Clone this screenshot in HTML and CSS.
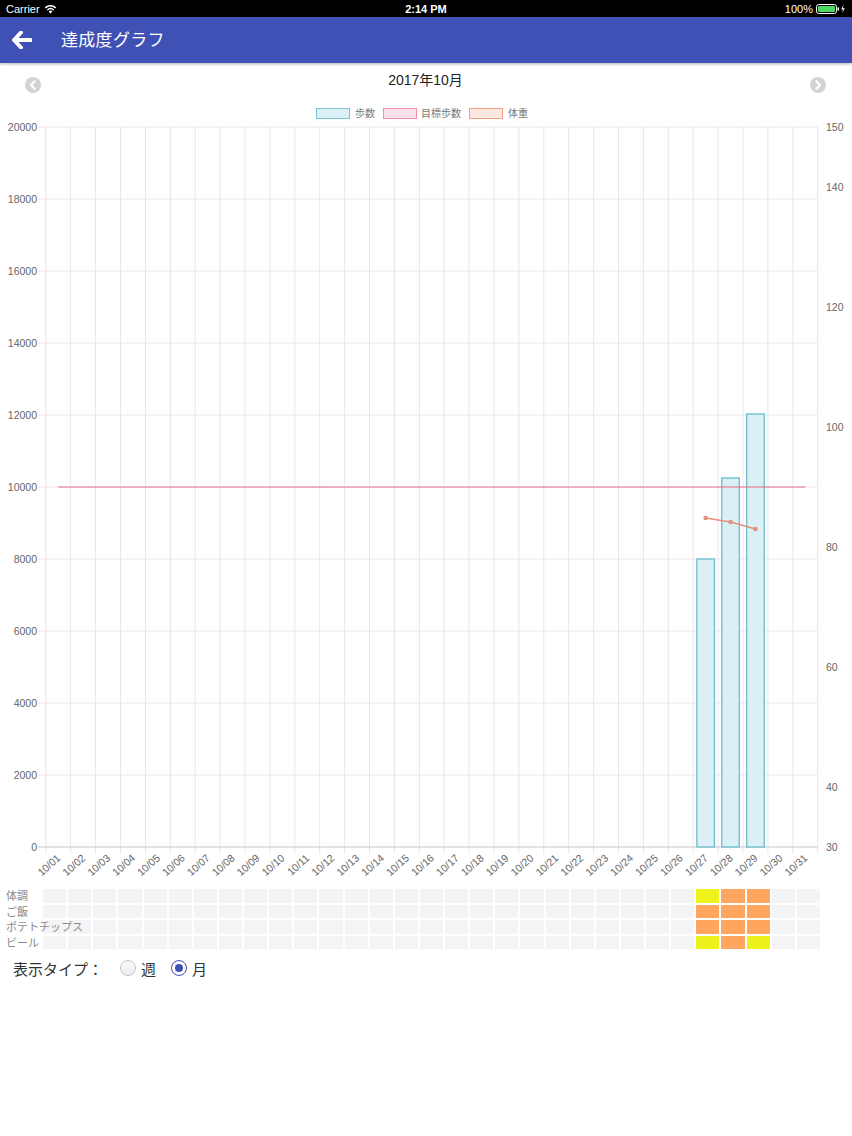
FILE: index.html
```html
<!DOCTYPE html>
<html lang="ja">
<head>
<meta charset="utf-8">
<title>達成度グラフ</title>
<link rel="stylesheet" href="styles.css">
</head>
<body>
<div class="statusbar">
  <div class="sb-left">
    <span class="carrier">Carrier</span>
    <svg class="wifi" width="13" height="10" viewBox="0 0 13 10"><path d="M6.5 9.6 4.6 7.4a2.8 2.8 0 0 1 3.8 0Z" fill="#fff"/><path d="M3.3 6a4.8 4.8 0 0 1 6.4 0" stroke="#fff" stroke-width="1.5" fill="none"/><path d="M1.3 3.9a7.6 7.6 0 0 1 10.4 0" stroke="#fff" stroke-width="1.5" fill="none"/></svg>
  </div>
  <div class="sb-time">2:14 PM</div>
  <div class="sb-right">
    <span>100%</span>
    <svg width="30" height="10" viewBox="0 0 30 10"><rect x="0.5" y="0.5" width="20" height="9" rx="2.3" fill="none" stroke="#fff"/><rect x="2" y="2" width="17" height="6" rx="1" fill="#4cd964"/><rect x="21.5" y="3.2" width="1.5" height="3.6" rx="0.7" fill="#fff"/><path d="M27.5 0.8 25.2 5.4h1.9l-0.9 3.8 2.6-4.9h-1.9L27.5 0.8Z" fill="#fff"/></svg>
  </div>
</div>
<header class="navbar">
  <svg class="back" width="20" height="18" viewBox="0 0 20 18"><path d="M9 1.5 2 9l7 7.5M2.6 9H18.5" stroke="#fff" stroke-width="4" stroke-linecap="round" stroke-linejoin="round" fill="none"/></svg>
  <h1 class="title">達成度グラフ</h1>
</header>
<div class="month-row">
  <span class="nav-btn"><svg width="16" height="16" viewBox="0 0 16 16"><circle cx="8" cy="8" r="8" fill="#d3d3d3"/><path d="M9.6 4.4 6 8l3.6 3.6" stroke="#fff" stroke-width="2.2" fill="none" stroke-linecap="round" stroke-linejoin="round"/></svg></span>
  <div class="month">2017年10月</div>
  <span class="nav-btn"><svg width="16" height="16" viewBox="0 0 16 16"><circle cx="8" cy="8" r="8" fill="#d3d3d3"/><path d="M6.4 4.4 10 8l-3.6 3.6" stroke="#fff" stroke-width="2.2" fill="none" stroke-linecap="round" stroke-linejoin="round"/></svg></span>
</div>
<svg class="chart" width="852" height="785" viewBox="0 100 852 785">
  <g class="legend">
    <rect x="316.5" y="108.5" width="33" height="10" fill="#dbf1f5" stroke="#7cc5d3"/>
    <text x="355" y="117">歩数</text>
    <rect x="383.5" y="108.5" width="33" height="10" fill="#fde2ec" stroke="#f08eac"/>
    <text x="421" y="117">目標歩数</text>
    <rect x="469.5" y="108.5" width="33" height="10" fill="#fee8e2" stroke="#f2a283"/>
    <text x="508" y="117">体重</text>
  </g>
  <path class="grid" d="M38 127H817.7M38 199H817.7M38 271H817.7M38 343H817.7M38 415H817.7M38 487H817.7M38 559H817.7M38 631H817.7M38 703H817.7M38 775H817.7"/>
  <path class="grid" d="M45.8 127V854M70.7 127V854M95.6 127V854M120.5 127V854M145.4 127V854M170.3 127V854M195.2 127V854M220.1 127V854M245 127V854M269.9 127V854M294.8 127V854M319.7 127V854M344.6 127V854M369.5 127V854M394.4 127V854M419.3 127V854M444.2 127V854M469.1 127V854M494 127V854M518.9 127V854M543.8 127V854M568.7 127V854M593.6 127V854M618.5 127V854M643.4 127V854M668.3 127V854M693.2 127V854M718.1 127V854M743 127V854M767.9 127V854M792.8 127V854M817.7 127V854"/>
  <path class="axis" d="M38 847H817.7"/>
  <g class="yl">
    <text x="37" y="131">20000</text>
    <text x="37" y="203">18000</text>
    <text x="37" y="275">16000</text>
    <text x="37" y="347">14000</text>
    <text x="37" y="419">12000</text>
    <text x="37" y="491">10000</text>
    <text x="37" y="563">8000</text>
    <text x="37" y="635">6000</text>
    <text x="37" y="707">4000</text>
    <text x="37" y="779">2000</text>
    <text x="37" y="851">0</text>
  </g>
  <g class="yr">
    <text x="826" y="131">150</text>
    <text x="826" y="191">140</text>
    <text x="826" y="311">120</text>
    <text x="826" y="431">100</text>
    <text x="826" y="551">80</text>
    <text x="826" y="671">60</text>
    <text x="826" y="791">40</text>
    <text x="826" y="851">30</text>
  </g>
  <g class="bars">
    <rect x="696.85" y="559" width="17.6" height="288"/>
    <rect x="721.75" y="478" width="17.6" height="369"/>
    <rect x="746.65" y="414" width="17.6" height="433"/>
  </g>
  <path class="goal" d="M58.25 487H805.25"/>
  <g class="weight">
    <path d="M705.65 518 730.55 522 755.45 529" fill="none"/>
    <circle cx="705.65" cy="518" r="2.3"/>
    <circle cx="730.55" cy="522" r="2.3"/>
    <circle cx="755.45" cy="529" r="2.3"/>
  </g>
  <g class="xl" text-anchor="end">
    <text transform="translate(61.2,859) rotate(-42)">10/01</text>
    <text transform="translate(86.1,859) rotate(-42)">10/02</text>
    <text transform="translate(111,859) rotate(-42)">10/03</text>
    <text transform="translate(135.9,859) rotate(-42)">10/04</text>
    <text transform="translate(160.8,859) rotate(-42)">10/05</text>
    <text transform="translate(185.7,859) rotate(-42)">10/06</text>
    <text transform="translate(210.6,859) rotate(-42)">10/07</text>
    <text transform="translate(235.5,859) rotate(-42)">10/08</text>
    <text transform="translate(260.4,859) rotate(-42)">10/09</text>
    <text transform="translate(285.3,859) rotate(-42)">10/10</text>
    <text transform="translate(310.2,859) rotate(-42)">10/11</text>
    <text transform="translate(335.1,859) rotate(-42)">10/12</text>
    <text transform="translate(360,859) rotate(-42)">10/13</text>
    <text transform="translate(384.9,859) rotate(-42)">10/14</text>
    <text transform="translate(409.8,859) rotate(-42)">10/15</text>
    <text transform="translate(434.7,859) rotate(-42)">10/16</text>
    <text transform="translate(459.6,859) rotate(-42)">10/17</text>
    <text transform="translate(484.5,859) rotate(-42)">10/18</text>
    <text transform="translate(509.4,859) rotate(-42)">10/19</text>
    <text transform="translate(534.3,859) rotate(-42)">10/20</text>
    <text transform="translate(559.2,859) rotate(-42)">10/21</text>
    <text transform="translate(584.1,859) rotate(-42)">10/22</text>
    <text transform="translate(609,859) rotate(-42)">10/23</text>
    <text transform="translate(633.9,859) rotate(-42)">10/24</text>
    <text transform="translate(658.8,859) rotate(-42)">10/25</text>
    <text transform="translate(683.7,859) rotate(-42)">10/26</text>
    <text transform="translate(708.6,859) rotate(-42)">10/27</text>
    <text transform="translate(733.5,859) rotate(-42)">10/28</text>
    <text transform="translate(758.4,859) rotate(-42)">10/29</text>
    <text transform="translate(783.3,859) rotate(-42)">10/30</text>
    <text transform="translate(808.2,859) rotate(-42)">10/31</text>
  </g>
</svg>
<section class="matrix">
  <div class="mrow">
    <span class="mlabel">体調</span>
    <div class="cells">
      <i></i><i></i><i></i><i></i><i></i><i></i><i></i><i></i><i></i><i></i><i></i><i></i><i></i><i></i><i></i><i></i><i></i><i></i><i></i><i></i><i></i><i></i><i></i><i></i><i></i><i></i><i class="y"></i><i class="o"></i><i class="o"></i><i></i><i></i>
    </div>
  </div>
  <div class="mrow">
    <span class="mlabel">ご飯</span>
    <div class="cells">
      <i></i><i></i><i></i><i></i><i></i><i></i><i></i><i></i><i></i><i></i><i></i><i></i><i></i><i></i><i></i><i></i><i></i><i></i><i></i><i></i><i></i><i></i><i></i><i></i><i></i><i></i><i class="o"></i><i class="o"></i><i class="o"></i><i></i><i></i>
    </div>
  </div>
  <div class="mrow">
    <span class="mlabel">ポテトチップス</span>
    <div class="cells">
      <i></i><i></i><i></i><i></i><i></i><i></i><i></i><i></i><i></i><i></i><i></i><i></i><i></i><i></i><i></i><i></i><i></i><i></i><i></i><i></i><i></i><i></i><i></i><i></i><i></i><i></i><i class="o"></i><i class="o"></i><i class="o"></i><i></i><i></i>
    </div>
  </div>
  <div class="mrow">
    <span class="mlabel">ビール</span>
    <div class="cells">
      <i></i><i></i><i></i><i></i><i></i><i></i><i></i><i></i><i></i><i></i><i></i><i></i><i></i><i></i><i></i><i></i><i></i><i></i><i></i><i></i><i></i><i></i><i></i><i></i><i></i><i></i><i class="y"></i><i class="o"></i><i class="y"></i><i></i><i></i>
    </div>
  </div>
</section>
<div class="type-row">
  <span class="type-label">表示タイプ：</span>
  <label class="radio"><span class="dot"></span>週</label>
  <label class="radio"><span class="dot on"></span>月</label>
</div>
</body>
</html>
```
FILE: styles.css
```css
html, body {
  margin: 0;
  padding: 0;
  background: #fff;
}
body {
  width: 852px;
  height: 1136px;
  overflow: hidden;
  font-family: "Liberation Sans", "Noto Sans CJK JP", sans-serif;
  color: #333;
}
.statusbar {
  height: 17px;
  background: #000;
  color: #fff;
  display: flex;
  align-items: center;
  justify-content: space-between;
  padding: 0 6px;
  font-size: 11px;
  position: relative;
}
.sb-left, .sb-right {
  display: flex;
  align-items: center;
  gap: 4px;
}
.sb-right { gap: 3px; }
.sb-time {
  font-weight: bold;
  position: absolute;
  left: 0;
  right: 0;
  text-align: center;
  pointer-events: none;
}
.navbar {
  height: 46px;
  background: #3f51b5;
  display: flex;
  align-items: center;
  box-shadow: 0 1px 3px rgba(0, 0, 0, 0.3);
  position: relative;
}
.back {
  margin-left: 12px;
  flex: none;
}
.title {
  margin: 0 0 3px 29px;
  font-size: 17px;
  line-height: 20px;
  font-weight: normal;
  color: #fff;
  font-family: "Noto Sans CJK JP", sans-serif;
  letter-spacing: 0.3px;
}
.month-row {
  height: 37px;
  display: flex;
  justify-content: space-between;
  align-items: flex-start;
  padding: 0 26px 0 25px;
}
.nav-btn {
  display: block;
  margin-top: 14px;
  height: 16px;
}
.month {
  font-size: 14px;
  color: #222;
  margin-top: 6px;
  font-family: "Liberation Sans", "Noto Sans CJK JP", sans-serif;
}
.chart {
  display: block;
}
.chart text {
  font-family: "Liberation Sans", "Noto Sans CJK JP", sans-serif;
  font-size: 10.5px;
  fill: #666;
}
.legend text {
  font-size: 10px;
  fill: #777;
}
.grid {
  stroke: #ece4ec;
  stroke-width: 1;
  fill: none;
}
.axis {
  stroke: #c9c6c9;
  stroke-width: 1;
}
.yl text { text-anchor: end; }
.bars rect {
  fill: #daf0f4;
  stroke: #73c0cf;
  stroke-width: 1.4;
}
.goal {
  stroke: #e36d86;
  stroke-width: 1;
}
.weight path {
  stroke: #e8917a;
  stroke-width: 1.4;
}
.weight circle {
  fill: #e58f7e;
}
.chart .xl text {
  font-size: 10.5px;
}
.matrix {
  margin-top: 4px;
  display: flex;
  flex-direction: column;
  gap: 2px;
}
.mrow {
  display: flex;
  height: 13.5px;
}
.mlabel {
  width: 43px;
  flex: none;
  padding-left: 6px;
  box-sizing: border-box;
  white-space: nowrap;
  font-size: 11px;
  line-height: 13.5px;
  color: #8a8a8a;
  position: relative;
  z-index: 1;
  font-family: "Noto Sans CJK JP", sans-serif;
}
.cells {
  width: 777px;
  display: grid;
  grid-template-columns: repeat(31, 1fr);
  column-gap: 2px;
}
.cells i {
  display: block;
  background: #f4f3f5;
}
.cells i.y { background: #eef21c; }
.cells i.o { background: #ffa55d; }
.type-row {
  display: flex;
  align-items: center;
  height: 20px;
  margin-top: 9px;
  padding-left: 13px;
  font-family: "Noto Sans CJK JP", sans-serif;
  font-size: 15px;
  color: #333;
}
.type-label {
  margin-right: 17px;
}
.radio {
  display: flex;
  align-items: center;
  gap: 5px;
  margin-right: 15px;
}
.dot {
  width: 16px;
  height: 16px;
  border-radius: 50%;
  border: 1px solid #c4c4c4;
  background: linear-gradient(#fafafa, #ececec);
  box-sizing: border-box;
  position: relative;
}
.dot.on {
  border: 1.5px solid #3f51b5;
  background: #fff;
}
.dot.on::after {
  content: "";
  position: absolute;
  left: 2.5px;
  top: 2.5px;
  width: 8px;
  height: 8px;
  border-radius: 50%;
  background: #3f51b5;
}
```
